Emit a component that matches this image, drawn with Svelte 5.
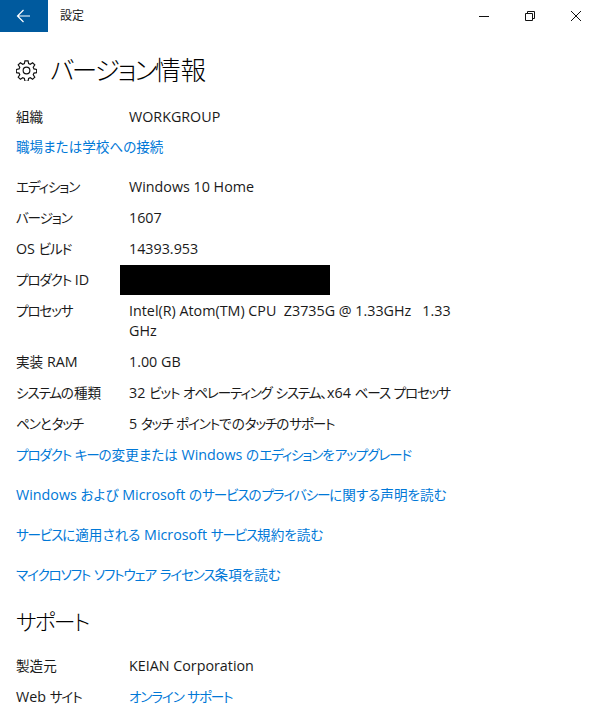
<script>
  const specRows = [
    ['エディション', 'Windows 10 Home'],
    ['バージョン', '1607'],
    ['OS ビルド', '14393.953'],
    ['プロダクト ID', null],
    ['プロセッサ', 'Intel(R) Atom(TM) CPU  Z3735G @ 1.33GHz   1.33 GHz'],
    ['実装 RAM', '1.00 GB'],
    ['システムの種類', '32 ビット オペレーティング システム、x64 ベース プロセッサ'],
    ['ペンとタッチ', '5 タッチ ポイントでのタッチのサポート']
  ];
  const links = [
    'プロダクト キーの変更または Windows のエディションをアップグレード',
    'Windows および Microsoft のサービスのプライバシーに関する声明を読む',
    'サービスに適用される Microsoft サービス規約を読む',
    'マイクロソフト ソフトウェア ライセンス条項を読む'
  ];

  // japanese is set much narrower in the original UI font, katakana most of all
  const runs = (text) => text.split(/([ァ-ヶー]+|[ぁ-ん一-龠、]+)/).filter(Boolean);
  const kindOf = (run) => /^[ァ-ヶー]/.test(run) ? 'kana' : /^[ぁ-ん一-龠、]/.test(run) ? 'cjk' : '';
</script>

{#snippet jp(text)}
  {#each runs(text) as run}
    {#if kindOf(run)}<span class={kindOf(run)}>{run}</span>{:else}{run}{/if}
  {/each}
{/snippet}

{#snippet row(label, value)}
  <div class="row">
    <div class="label">{@render jp(label)}</div>
    {#if value === null}
      <div class="redacted"></div>
    {:else}
      <div class="value">{@render jp(value)}</div>
    {/if}
  </div>
{/snippet}

<div class="window">
  <header class="titlebar">
    <button class="back" aria-label="戻る">
      <svg width="16" height="16" viewBox="0 0 16 16" fill="none" stroke="#fff" stroke-width="1.2">
        <path d="M1.5 8H14M7.5 2L1.5 8l6 6" />
      </svg>
    </button>
    <span class="title">設定</span>
    <div class="controls">
      <svg width="46" height="32" viewBox="0 0 46 32" fill="none" stroke="#111">
        <path d="M18 16.5h10" />
      </svg>
      <svg width="46" height="32" viewBox="0 0 46 32" fill="none" stroke="#111">
        <path d="M18.5 13.5h7v7h-7zM20.5 13.5v-2h7v7h-2" />
      </svg>
      <svg width="46" height="32" viewBox="0 0 46 32" fill="none" stroke="#111">
        <path d="M18 11l10 10M28 11L18 21" />
      </svg>
    </div>
  </header>

  <main>
    <div class="heading">
      <svg width="21" height="21" viewBox="0 0 20 20" fill="none" stroke="#111" stroke-width="1.1">
        <circle cx="10" cy="10" r="3.2" />
        <path d="M8.5 0.8h3l.5 2.6 1.6.7 2.2-1.5 2.1 2.1-1.5 2.2.7 1.6 2.6.5v3l-2.6.5-.7 1.6 1.5 2.2-2.1 2.1-2.2-1.5-1.6.7-.5 2.6h-3l-.5-2.6-1.6-.7-2.2 1.5-2.1-2.1 1.5-2.2-.7-1.6-2.6-.5v-3l2.6-.5.7-1.6-1.5-2.2 2.1-2.1 2.2 1.5 1.6-.7z" />
      </svg>
      <h1>{@render jp('バージョン情報')}</h1>
    </div>

    <section class="group">
      {@render row('組織', 'WORKGROUP')}
      <a class="link" href="#top">{@render jp('職場または学校への接続')}</a>
    </section>

    <section class="specs">
      {#each specRows as r}
        {@render row(r[0], r[1])}
      {/each}
    </section>

    <nav class="links">
      {#each links as l}
        <a class="link" href="#top">{@render jp(l)}</a>
      {/each}
    </nav>

    <h2>{@render jp('サポート')}</h2>
    <section>
      {@render row('製造元', 'KEIAN Corporation')}
      <div class="row">
        <div class="label">{@render jp('Web サイト')}</div>
        <a class="value link" href="#top">{@render jp('オンライン サポート')}</a>
      </div>
    </section>
  </main>
</div>

<style>
  :global(body) {
    margin: 0;
    background: #fff;
  }

  .window {
    width: 600px;
    height: 720px;
    overflow: hidden;
    font-family: "Open Sans", "Noto Sans CJK JP", sans-serif;
    font-feature-settings: "palt";
    font-size: 14.3px;
    line-height: 20px;
    color: #1a1a1a;
  }

  .kana {
    letter-spacing: -0.085em;
    font-size: 0.95em;
  }

  .cjk {
    font-size: 0.95em;
  }

  .titlebar {
    display: flex;
    align-items: center;
    height: 32px;
  }

  .back {
    width: 48px;
    height: 32px;
    padding: 0;
    border: 0;
    background: #005a9e;
    display: flex;
    align-items: center;
    justify-content: center;
  }

  .title {
    margin-left: 12px;
    font-size: 12px;
  }

  .controls {
    margin-left: auto;
    display: flex;
    margin-right: 1px;
  }

  main {
    padding: 0 16px;
  }

  .heading {
    display: flex;
    align-items: center;
    gap: 13px;
    margin-top: 17px;
    height: 42px;
  }

  h1 {
    margin: 0;
    font-size: 27px;
    font-weight: 300;
    line-height: 42px;
    color: #000;
  }

  .group {
    margin-top: 10px;
  }

  .row {
    display: flex;
    padding: 5.5px 0;
  }

  .label {
    width: 113px;
    flex: none;
  }

  .value {
    width: 330px;
    white-space: pre-wrap;
  }

  .redacted {
    width: 210px;
    height: 30px;
    margin: -5px 0 -5px -9px;
    background: #000;
  }

  .link {
    display: block;
    color: #0078d7;
    text-decoration: none;
  }

  .group .link {
    margin-top: 5px;
  }

  .specs {
    margin-top: 14px;
  }

  .links {
    margin-top: 6px;
    display: flex;
    flex-direction: column;
    gap: 20px;
  }

  h2 {
    margin: 21px 0 13px;
    font-size: 23px;
    font-weight: 300;
    line-height: 30px;
    color: #000;
  }
</style>
